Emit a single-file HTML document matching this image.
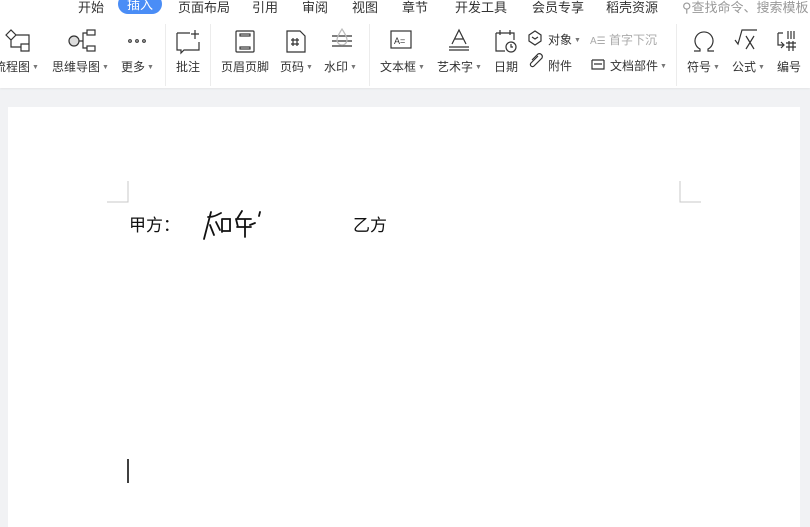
<!DOCTYPE html>
<html><head><meta charset="utf-8"><style>
body{margin:0;width:810px;height:512px;overflow:hidden;background:#f1f2f4;font-family:"Liberation Sans","Noto Sans CJK SC",sans-serif;position:relative}
.top{position:absolute;left:0;top:0;width:810px;height:88px;background:#fff;box-shadow:0 1px 2px rgba(0,0,0,.06)}
.t{position:absolute;top:-3px;font-size:13px;color:#333;white-space:nowrap}
.pill{position:absolute;left:118px;top:-6px;width:44px;height:20px;border-radius:10px;background:#4a8df6;color:#fff;font-size:13px;text-align:center;line-height:21px}
.l{position:absolute;font-size:12px;color:#333;white-space:nowrap}
.l i{font-style:normal;font-size:7px;color:#777;margin-left:2px;vertical-align:2px}
.sep{position:absolute;top:24px;width:1px;height:62px;background:#ececec}
svg.ic{position:absolute;overflow:visible}
.page{position:absolute;left:8px;top:107px;width:792px;height:420px;background:#fff}
.doc{position:absolute;font-size:17px;color:#111}
</style></head><body>
<div class="top">
<span class="t" style="left:78px">开始</span>
<div class="pill">插入</div>
<span class="t" style="left:178px">页面布局</span>
<span class="t" style="left:252px">引用</span>
<span class="t" style="left:302px">审阅</span>
<span class="t" style="left:352px">视图</span>
<span class="t" style="left:402px">章节</span>
<span class="t" style="left:455px">开发工具</span>
<span class="t" style="left:532px">会员专享</span>
<span class="t" style="left:606px">稻壳资源</span>
<span class="t" style="left:682px;color:#999">⚲查找命令、搜索模板</span>

<svg class="ic" style="left:0;top:0" width="810" height="90" fill="none" stroke="#333" stroke-width="1.2">
<path d="M6 35l5-5 5 5-5 5z M11 40v7h10 M16 35h13v12 M21 44h8v7h-8z"/>
<circle cx="74" cy="41" r="5" fill="#ddd"/><path d="M79 41h4v-8h4 M83 41v7h4"/><rect x="87" y="30" width="8" height="5"/><rect x="87" y="46" width="8" height="5"/>
<circle cx="130" cy="41" r="1.3"/><circle cx="137" cy="41" r="1.3"/><circle cx="144" cy="41" r="1.3"/>
<path d="M177 33h13 M177 33v17h4v3l3-3h15v-8 M195 30v9 M191 34h8"/>
<rect x="236" y="31" width="18" height="21" rx="1"/><rect x="240" y="34" width="10" height="2"/><rect x="240" y="47" width="10" height="2"/>
<path d="M287 31h13l5 5v16h-18z M293 38v8 M297 38v8 M291 40h8 M291 44h8"/>
<path d="M332 36h20 M332 41h20 M332 46h20" /><path d="M342 29c-3 5-5 8-5 11a5 5 0 0 0 10 0c0-3-2-6-5-11z" stroke="#bbb"/>
<rect x="391" y="31" width="20" height="17"/><text x="394" y="44" font-size="9" fill="#333" stroke="none">A=</text>
<path d="M452 44l7-14 7 14 M455 39h8 M449 47h20 M449 50h20"/>
<path d="M496 33h18v7 M496 33v18h9 M500 30v5 M510 30v5"/><circle cx="511" cy="47" r="5"/><path d="M511 44v3h2"/>
<path d="M529 35l6-4 6 4v6l-6 4-6-4z M532 37l3 2 3-2"/>
<path d="M532 60l6-6a3 3 0 0 1 4 4l-8 8a2 2 0 0 1-3-3l7-7"/>
<path d="M592 60h12 M592 60v9h12v-9 M594 64h8"/>
<path d="M694 51h6v-2a9 9 0 1 1 8 0v2h6" /><path d="M735 40l3 4 4-14h15 M746 36l8 13 M754 36l-8 13"/>
<path d="M778 33h5 M778 33v12h5 M781 42l3 3-3 3 M788 31v8 M791 31v8 M794 31v8 M786 43h10 M786 47h10 M789 41v10 M793 41v10"/>
</svg>
<span class="l" style="left:-6px;top:58px">流程图<i>▼</i></span>
<span class="l" style="left:52px;top:58px">思维导图<i>▼</i></span>
<span class="l" style="left:121px;top:58px">更多<i>▼</i></span>
<div class="sep" style="left:165px"></div>
<span class="l" style="left:176px;top:58px">批注</span>
<div class="sep" style="left:210px"></div>
<span class="l" style="left:221px;top:58px">页眉页脚</span>
<span class="l" style="left:280px;top:58px">页码<i>▼</i></span>
<span class="l" style="left:324px;top:58px">水印<i>▼</i></span>
<div class="sep" style="left:369px"></div>
<span class="l" style="left:380px;top:58px">文本框<i>▼</i></span>
<span class="l" style="left:437px;top:58px">艺术字<i>▼</i></span>
<span class="l" style="left:494px;top:58px">日期</span>
<span class="l" style="left:548px;top:31px">对象<i>▼</i></span>
<span class="l" style="left:590px;top:31px;color:#aaa"><span style="font-size:10px">A☰</span> 首字下沉</span>
<span class="l" style="left:548px;top:57px">附件</span>
<span class="l" style="left:610px;top:57px">文档部件<i>▼</i></span>
<div class="sep" style="left:676px"></div>
<span class="l" style="left:687px;top:58px">符号<i>▼</i></span>
<span class="l" style="left:732px;top:58px">公式<i>▼</i></span>
<span class="l" style="left:777px;top:58px">编号</span>
</div>
<div class="page">
<svg style="position:absolute;left:0;top:0" width="792" height="420" fill="none" stroke="#c8c8c8" stroke-width="1">
<path d="M120 74v21h-21 M672 74v21h21"/>
<g stroke="#111" stroke-width="1.8" stroke-linecap="round">
<path d="M203 105l-7 27 M200 110c4 0 7-1 9-2 M202 118l4 10 M209 108l4-2 M214 112v13 M214 112h8v12h-8 M208 115l4 8"/>
<path d="M234 104l-5 8h14 M228 112l2 8 M229 120h14 M237 112v18 M242 118l5-2 M252 105l-1 4"/>
</g>
<path d="M120 352v24" stroke="#000" stroke-width="1.5"/>
</svg>
<span class="doc" style="left:121px;top:104px">甲方<span style="display:inline-block;width:17px">：</span></span>
<span class="doc" style="left:345px;top:104px">乙方</span>
</div>
</body></html>
